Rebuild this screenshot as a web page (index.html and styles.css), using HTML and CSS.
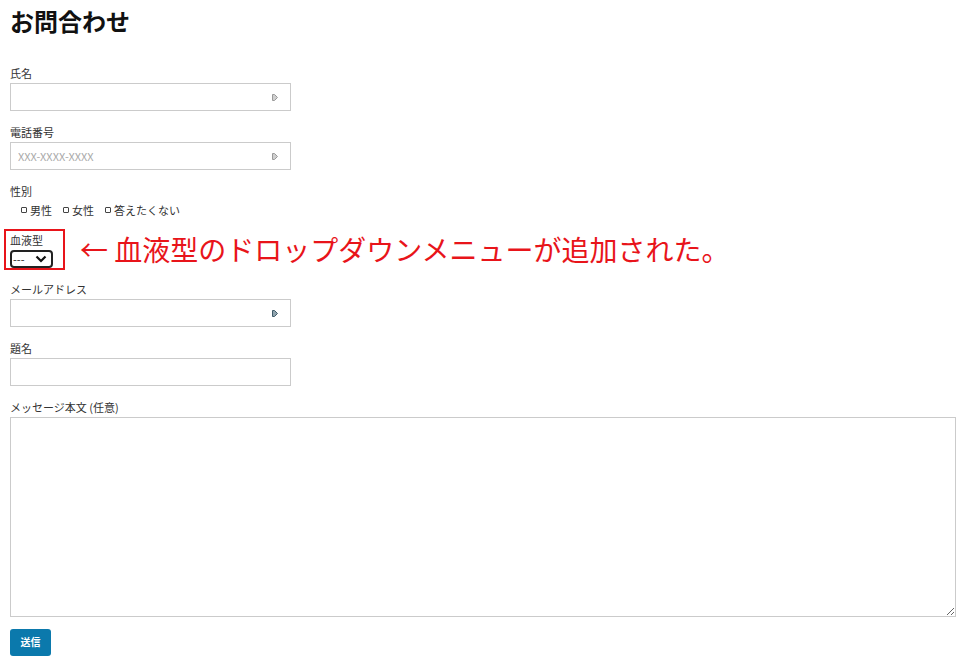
FILE: index.html
```html
<!DOCTYPE html>
<html lang="ja">
<head>
<meta charset="utf-8">
<title>お問合わせ</title>
<link rel="stylesheet" href="styles.css">
</head>
<body>
<main class="page">
  <h1 class="title">お問合わせ</h1>
  <form class="form">
    <div class="field">
      <label class="label">氏名</label>
      <div class="input-wrap">
        <input class="input" type="text">
        <svg class="af-icon" width="6" height="7" viewBox="0 0 6 7"><path d="M0.5 0.5h2l3 3-3 3h-2z" fill="#cfcfcf" stroke="#9a9a9a" stroke-width="1"/></svg>
      </div>
    </div>
    <div class="field">
      <label class="label">電話番号</label>
      <div class="input-wrap">
        <input class="input" type="text" placeholder="XXX-XXXX-XXXX">
        <svg class="af-icon" width="6" height="7" viewBox="0 0 6 7"><path d="M0.5 0.5h2l3 3-3 3h-2z" fill="#cfcfcf" stroke="#9a9a9a" stroke-width="1"/></svg>
      </div>
    </div>
    <div class="field">
      <span class="label">性別</span>
      <div class="options">
        <label class="option"><input class="radio" type="radio" name="sex">男性</label>
        <label class="option"><input class="radio" type="radio" name="sex">女性</label>
        <label class="option"><input class="radio" type="radio" name="sex">答えたくない</label>
      </div>
    </div>
    <div class="field field-blood">
      <label class="label">血液型</label>
      <select class="select"><option>---</option></select>
      <span class="mark-box"></span>
      <p class="note">← 血液型のドロップダウンメニューが追加された。</p>
    </div>
    <div class="field">
      <label class="label">メールアドレス</label>
      <div class="input-wrap">
        <input class="input" type="email">
        <svg class="af-icon" width="6" height="7" viewBox="0 0 6 7"><path d="M0.5 0.5h2l3 3-3 3h-2z" fill="#8fa3ad" stroke="#3f5a68" stroke-width="1"/></svg>
      </div>
    </div>
    <div class="field">
      <label class="label">題名</label>
      <input class="input" type="text">
    </div>
    <div class="field field-msg">
      <label class="label">メッセージ本文 (任意)</label>
      <textarea class="textarea"></textarea>
    </div>
    <button class="submit" type="button">送信</button>
  </form>
</main>
</body>
</html>
```

FILE: styles.css
```css
* { box-sizing: border-box; }
html, body { margin: 0; padding: 0; background: #fff; }
body {
  font-family: "Noto Sans CJK JP", "Noto Sans", sans-serif;
  color: #333;
}
.page { padding: 3px 10px 0 10px; }
.title {
  margin: 0 0 27px 0;
  font-size: 24px;
  line-height: 36px;
  font-weight: 700;
  color: #111;
}
.form { display: flex; flex-direction: column; align-items: flex-start; }
.field {
  display: flex;
  flex-direction: column;
  align-items: flex-start;
  margin-bottom: 14px;
}
.label {
  display: block;
  font-size: 11px;
  line-height: 15px;
  height: 15px;
  margin-bottom: 2px;
  color: #333;
}
.input-wrap { position: relative; width: 281px; }
.input {
  display: block;
  width: 281px;
  height: 28px;
  border: 1px solid #cbcbcb;
  border-radius: 0;
  padding: 0 7px;
  font-family: "Noto Sans CJK JP", "Noto Sans", sans-serif;
  font-size: 11px;
  color: #333;
  outline: none;
  background: #fff;
}
.input::placeholder { color: #aaa; }
.af-icon { position: absolute; right: 13px; top: 11px; }
.options {
  display: flex;
  gap: 11px;
  height: 18px;
  align-items: center;
  padding-left: 11px;
  font-size: 11px;
  color: #333;
}
.option { display: flex; align-items: center; gap: 3px; }
.radio {
  appearance: none;
  -webkit-appearance: none;
  margin: 0;
  width: 6px;
  height: 6px;
  border: 1px solid #444;
  border-radius: 1px;
  background: #fff;
}
.field-blood { position: relative; }
.select {
  appearance: none;
  -webkit-appearance: none;
  width: 43px;
  height: 18px;
  border: 2px solid #222;
  border-radius: 4px;
  padding: 0 0 0 1px;
  font-family: "Noto Sans CJK JP", "Noto Sans", sans-serif;
  font-size: 11px;
  line-height: 14px;
  color: #222;
  background: #fff url("data:image/svg+xml;utf8,<svg xmlns='http://www.w3.org/2000/svg' width='12' height='8' viewBox='0 0 12 8'><path d='M1.5 1.5l4.5 4.5 4.5-4.5' fill='none' stroke='%23111' stroke-width='2.2'/></svg>") no-repeat right 4px center;
}
.mark-box {
  position: absolute;
  left: -6px;
  top: -4px;
  width: 61px;
  height: 41px;
  border: 2px solid #e8141a;
}
.note {
  position: absolute;
  left: 70px;
  top: -3px;
  margin: 0;
  white-space: nowrap;
  font-size: 28px;
  line-height: 38px;
  color: #e8141a;
  font-weight: 400;
}
.field-msg { margin-bottom: 12px; }
.textarea {
  display: block;
  width: 946px;
  height: 200px;
  border: 1px solid #cbcbcb;
  border-radius: 0;
  padding: 6px 7px;
  font-family: "Noto Sans CJK JP", "Noto Sans", sans-serif;
  font-size: 11px;
  outline: none;
}
.submit {
  width: 41px;
  height: 27px;
  border: none;
  border-radius: 3px;
  background: #0b79ac;
  color: #fff;
  font-family: "Noto Sans CJK JP", "Noto Sans", sans-serif;
  font-size: 10px;
  font-weight: 700;
  padding: 0 0 3px 0;
}
```
